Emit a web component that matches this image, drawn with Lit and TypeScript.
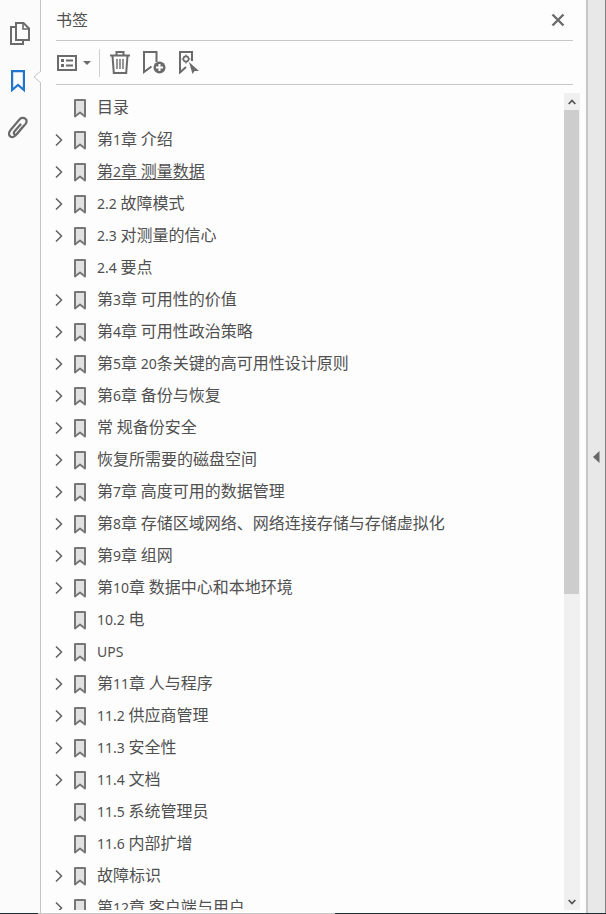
import { LitElement, html, css, svg } from "lit";
import { customElement } from "lit/decorators.js";

const rows: [string, boolean, boolean?][] = [
  ["目录", false], ["第1章 介绍", true], ["第2章 测量数据", true, true], ["2.2 故障模式", true],
  ["2.3 对测量的信心", true], ["2.4 要点", false], ["第3章 可用性的价值", true], ["第4章 可用性政治策略", true],
  ["第5章 20条关键的高可用性设计原则", true], ["第6章 备份与恢复", true], ["常 规备份安全", true], ["恢复所需要的磁盘空间", true],
  ["第7章 高度可用的数据管理", true], ["第8章 存储区域网络、网络连接存储与存储虚拟化", true], ["第9章 组网", true],
  ["第10章 数据中心和本地环境", true], ["10.2 电", false], ["UPS", true], ["第11章 人与程序", true],
  ["11.2 供应商管理", true], ["11.3 安全性", true], ["11.4 文档", true], ["11.5 系统管理员", false],
  ["11.6 内部扩增", false], ["故障标识", true], ["第12章 客户端与用户", true],
];

const runs = (t: string) =>
  t.split(/([A-Za-z0-9. ]+)/).filter(Boolean).map((p) =>
    /^[A-Za-z0-9. ]+$/.test(p) ? html`<span class="lat">${p}</span>` : p);

@customElement("app-root")
export class AppRoot extends LitElement {
  static styles = css`
    :host { display: block; width: 606px; height: 914px; overflow: hidden; position: relative;
      font-family: "Noto Sans", "Noto Sans CJK SC", sans-serif; color: #505050; background: #fdfdfd; }
    .app { display: flex; height: 913px; }
    .rail { flex: none; border-right: 1px solid #c4c4c4; background: #fbfbfb; display: flex;
      flex-direction: column; align-items: flex-start; padding: 22px 0 0 8px; box-sizing: border-box; width: 41px; position: relative; }
    .rail svg { display: block; }
    .i1 { margin-left: 2px; }
    .i2 { margin: 25px 0 0 3px; }
    .i3 { margin-top: 24px; }
    .notch { position: absolute; left: 33px; top: 71px; width: 10px; height: 12px; }
    .panel { flex: 1; min-width: 0; display: flex; flex-direction: column; position: relative; background: #fdfdfd; }
    .head { height: 40px; margin: 0 13px 0 15px; border-bottom: 1px solid #c8c8c8; display: flex; align-items: center;
      justify-content: space-between; font-size: 16px; box-sizing: content-box; }
    .head span { line-height: 40px; }
    .close { margin-right: 8px; display: block; }
    .tools { height: 43px; margin: 0 13px 0 15px; border-bottom: 1px solid #c8c8c8; display: flex; align-items: center; }
    .tools svg { display: block; flex: none; }
    .sep { width: 1px; height: 28px; background: #d0d0d0; margin: 0 10px 0 8px; }
    .t1 { margin-left: 1px; }
    .caret { margin-left: 6px; }
    .t3, .t4 { margin-left: 13px; }
    .body { flex: 1; min-height: 0; display: flex; overflow: hidden; padding-top: 7px; }
    .list { flex: 1; min-width: 0; overflow: hidden; height: 818px; }
    .row { height: 32px; display: flex; align-items: center; font-size: 16px; white-space: nowrap; }
    .chev { width: 10px; margin-left: 13px; flex: none; display: block; }
    .noexp { width: 10px; margin-left: 13px; flex: none; }
    .mark { margin-left: 10px; flex: none; display: block; }
    .label { margin-left: 11px; line-height: 32px; height: 32px; position: relative; top: -1px; }
    .lat { font-size: 14px; }
    .u { text-decoration: underline; text-underline-offset: 2px; }
    .sb { width: 16px; margin: 1px 6px 0 0; flex: none; display: flex; flex-direction: column; background: #f0f0f0; height: 817px; }
    .sbtn { height: 17px; flex: none; display: flex; align-items: center; justify-content: center; }
    .thumb { height: 484px; width: 15px; background: #cdcdcd; flex: none; }
    .track { flex: 1; }
    .strip { width: 20px; flex: none; border-left: 2px solid #c6c6c6; border-right: 1px solid #808080; background: #e8e8e8;
      box-sizing: border-box; display: flex; align-items: center; justify-content: center; }
    .bottom { height: 1px; display: flex; background: #1f2d33; }
    .gap { width: 297px; margin-left: 38px; background: #c8c8c8; }
  `;

  mark() {
    return html`<svg class="mark" width="12" height="19" viewBox="0 0 12 19"><path d="M1 1H11V17.5L6 13.5L1 17.5Z" fill="#e2e2e2" stroke="#777" stroke-width="2" stroke-linejoin="round"/></svg>`;
  }

  render() {
    const stroke = "#6b6b6b";
    return html`<div class="app">
      <div class="rail">
        <svg class="i1" width="20" height="23" viewBox="0 0 20 23" fill="none" stroke="${stroke}" stroke-width="2">
          <path d="M5.5 5H1V22H13V18"/><path d="M6 1H13.5L19 6.5V18H6Z"/><path d="M13 1.5V7H18.5" stroke-width="1.6"/>
        </svg>
        <svg class="i2" width="14" height="22" viewBox="0 0 14 22" fill="none" stroke="#2175cc" stroke-width="2.2"><path d="M1.1 1.1H12.9V20L7 15L1.1 20Z"/></svg>
        <svg class="i3" width="20" height="23" viewBox="0 0 20 23" fill="none" stroke="${stroke}" stroke-width="2.2" stroke-linecap="round">
          <path d="M15.5 10L7.5 19.5C5.5 21.5 3 21.5 1.8 20C0.5 18.4 1 16 2.6 14L11 4C12.8 1.6 15.5 1.2 17.2 2.6C18.9 4 18.8 6.4 17.2 8.4L9 18C8.2 18.9 7 19 6.3 18.2C5.6 17.4 5.8 16.3 6.6 15.3L12.5 8.5"/>
        </svg>
        <svg class="notch" viewBox="0 0 10 12"><path d="M8 0L0 6L8 12H10V0Z" fill="#fdfdfd"/><path d="M8 0L1 6L8 12" fill="none" stroke="#c4c4c4"/></svg>
      </div>
      <div class="panel">
        <div class="head"><span>书签</span>
          <svg class="close" width="14" height="14" viewBox="0 0 14 14"><path d="M1.5 1.5L12.5 12.5M12.5 1.5L1.5 12.5" stroke="${stroke}" stroke-width="2.4"/></svg>
        </div>
        <div class="tools">
          <svg class="t1" width="20" height="16" viewBox="0 0 20 16" fill="none"><rect x="1" y="1" width="18" height="14" stroke="${stroke}" stroke-width="2"/><rect x="4" y="4" width="3" height="3" fill="${stroke}"/><rect x="4" y="9" width="3" height="3" fill="${stroke}"/><path d="M9 5.5H16M9 10.5H16" stroke="${stroke}" stroke-width="2"/></svg>
          <svg class="caret" width="8" height="4" viewBox="0 0 8 4"><path d="M0 0H8L4 4Z" fill="${stroke}"/></svg>
          <div class="sep"></div>
          <svg width="20" height="23" viewBox="0 0 20 23" fill="none" stroke="${stroke}"><path d="M0 4.5H20" stroke-width="2"/><path d="M6.5 4V1H13.5V4" stroke-width="2"/><path d="M2.5 5L3.8 22H16.2L17.5 5" stroke-width="2"/><path d="M7 8V18M10 8V18M13 8V18" stroke-width="1.4"/></svg>
          <svg class="t3" width="23" height="23" viewBox="0 0 23 23" fill="none"><path d="M8.5 15.5L1 21V1H13.5V11" stroke="${stroke}" stroke-width="2"/><circle cx="16.5" cy="16.5" r="6" fill="${stroke}"/><path d="M13 16.5H20M16.5 13V20" stroke="#fff" stroke-width="2"/></svg>
          <svg class="t4" width="20" height="23" viewBox="0 0 20 23" fill="none"><path d="M7 16L1 21.5V1H13V10" stroke="${stroke}" stroke-width="2"/><circle cx="7" cy="8" r="2.6" stroke="${stroke}" stroke-width="1.6"/><path d="M7 3.5V5M7 11V12.5M2.5 8H4M10 8H11.5" stroke="${stroke}" stroke-width="1.2"/><path d="M10 11L20 20H15.5L13.5 23Z" fill="${stroke}"/></svg>
        </div>
        <div class="body">
          <div class="list">
            ${rows.map(([t, exp, u]) => html`<div class="row">
              ${exp ? svg`<svg class="chev" width="10" height="14" viewBox="0 0 10 14" fill="none"><path d="M2 1.5L7.5 7L2 12.5" stroke="#666" stroke-width="1.6"/></svg>` : html`<span class="noexp"></span>`}
              ${this.mark()}
              <span class="label ${u ? "u" : ""}">${runs(t)}</span>
            </div>`)}
          </div>
          <div class="sb">
            <div class="sbtn"><svg width="8" height="6" viewBox="0 0 8 6" fill="none"><path d="M0.7 5L4 1.5L7.3 5" stroke="#555" stroke-width="1.8"/></svg></div>
            <div class="thumb"></div>
            <div class="track"></div>
            <div class="sbtn"><svg width="8" height="6" viewBox="0 0 8 6" fill="none"><path d="M0.7 1L4 4.5L7.3 1" stroke="#555" stroke-width="1.8"/></svg></div>
          </div>
        </div>
      </div>
      <div class="strip"><svg width="7" height="12" viewBox="0 0 7 12"><path d="M6.5 0V12L0 6Z" fill="#666"/></svg></div>
    </div>
    <div class="bottom"><div class="gap"></div></div>`;
  }
}
